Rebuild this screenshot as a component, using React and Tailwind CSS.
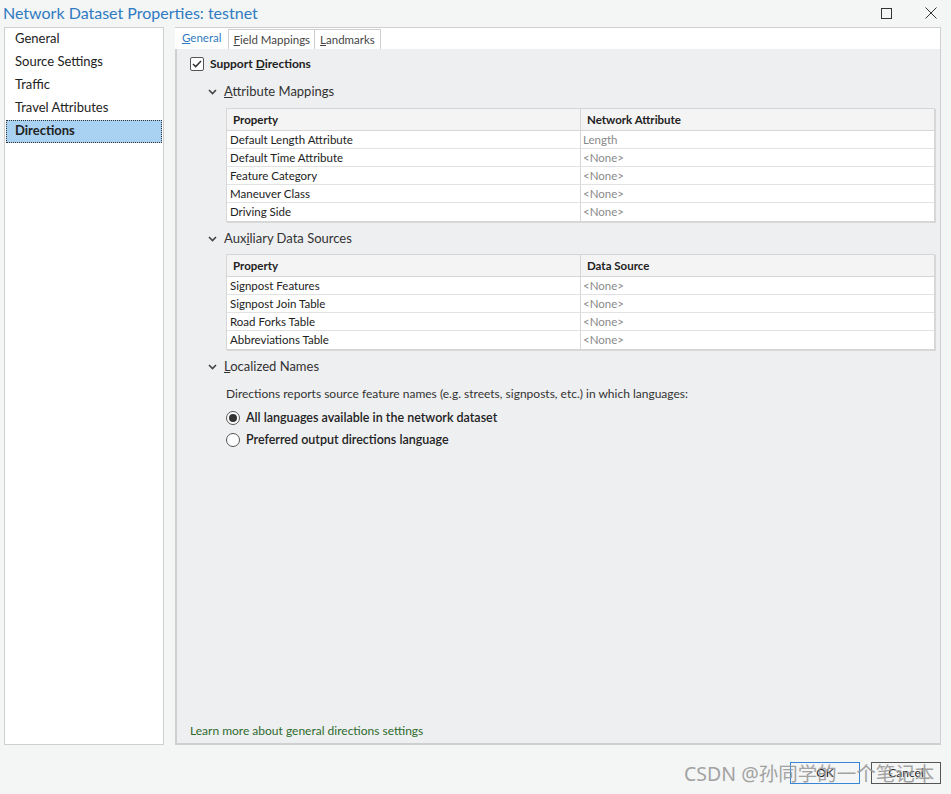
import React, { useState } from "react";

const navItems = ["General", "Source Settings", "Traffic", "Travel Attributes", "Directions"];

const attributeRows = [
  ["Default Length Attribute", "Length"],
  ["Default Time Attribute", "<None>"],
  ["Feature Category", "<None>"],
  ["Maneuver Class", "<None>"],
  ["Driving Side", "<None>"],
];

const sourceRows = [
  ["Signpost Features", "<None>"],
  ["Signpost Join Table", "<None>"],
  ["Road Forks Table", "<None>"],
  ["Abbreviations Table", "<None>"],
];

const Chevron = () => (
  <svg width="9" height="6" viewBox="0 0 9 6" className="mr-[7px]">
    <path d="M1 1 L4.5 4.5 L8 1" fill="none" stroke="#444" strokeWidth="1.6" />
  </svg>
);

const Section = ({ label, hot }) => (
  <div className="flex h-[18px] items-center pl-[31px] text-[13px] text-[#333]">
    <Chevron />
    <span>
      {label.slice(0, hot)}
      <span className="underline">{label[hot]}</span>
      {label.slice(hot + 1)}
    </span>
  </div>
);

const PropTable = ({ head, rows }) => (
  <div className="ml-[49px] mr-[5px] border border-[#d6d6d6] bg-white text-[11.5px] text-[#222] shadow-[1px_1px_0_#d8d8d8]">
    <div className="flex h-[22px] items-center border-b border-[#d6d6d6] bg-[#f4f4f4] font-bold">
      <div className="flex h-full w-[354px] items-center border-r border-[#d6d6d6] pl-[6px]">Property</div>
      <div className="pl-[6px]">{head}</div>
    </div>
    {rows.map(([k, v], i) => (
      <div
        key={k}
        className={`flex h-[18px] items-center ${i < rows.length - 1 ? "border-b border-[#e2e2e2]" : ""}`}
      >
        <div className="flex h-full w-[354px] items-center border-r border-[#d6d6d6] pl-[3px]">{k}</div>
        <div className="pl-[2px] text-[#8a8a8a]">{v}</div>
      </div>
    ))}
  </div>
);

const Radio = ({ checked, label, onClick }) => (
  <div
    className="flex h-[16px] cursor-pointer items-center gap-[6px] pl-[49px] text-[12.5px] font-semibold text-[#222]"
    onClick={onClick}
  >
    <span className="flex h-[14px] w-[14px] items-center justify-center rounded-full border border-[#555] bg-white">
      {checked && <span className="h-[8px] w-[8px] rounded-full bg-[#333]" />}
    </span>
    {label}
  </div>
);

export default function App() {
  const [selected, setSelected] = useState("Directions");
  const [support, setSupport] = useState(true);
  const [lang, setLang] = useState(0);

  return (
    <div className="relative flex h-[794px] w-[951px] flex-col bg-[#f4f5f5] font-['Lato',sans-serif] text-[#222]">
      {/* title bar */}
      <div className="flex h-[27px] items-center justify-between pb-[1px] pl-[3px] pr-[14px]">
        <span className="text-[16px] text-[#2f7bc2]">Network Dataset Properties: testnet</span>
        <div className="flex items-center gap-[33px]">
          <svg width="11" height="11" viewBox="0 0 11 11">
            <rect x="0.5" y="0.5" width="10" height="10" fill="none" stroke="#333" />
          </svg>
          <svg width="12" height="12" viewBox="0 0 12 12">
            <path d="M0.5 0.5 L11.5 11.5 M11.5 0.5 L0.5 11.5" stroke="#333" strokeWidth="1" />
          </svg>
        </div>
      </div>

      <div className="flex h-[718px] gap-[11px] pl-[4px] pr-[10px]">
        {/* left nav */}
        <div className="w-[160px] border border-[#cfcfcf] bg-white">
          {navItems.map((item) => (
            <div
              key={item}
              onClick={() => setSelected(item)}
              className={`mx-[1px] flex h-[23px] cursor-pointer items-center pb-[2px] pl-[8px] text-[13px] ${
                selected === item
                  ? "border border-dotted border-[#333] bg-[#a9d1f1] font-bold"
                  : "border border-transparent"
              }`}
            >
              {item}
            </div>
          ))}
        </div>

        {/* right panel */}
        <div className="flex flex-1 flex-col">
          <div className="flex h-[22px] items-end border-r border-t border-[#cfcfcf] bg-white pl-[3px]">
            <div className="flex h-[21px] items-center px-[4px] pb-[2px] text-[11.5px] text-[#2f7bc2]">
              <span><span className="underline">G</span>eneral</span>
            </div>
            <div className="ml-[3px] flex h-[20px] items-center border border-b-0 border-[#cfcfcf] px-[4px] text-[11.5px] text-[#444]">
              <span><span className="underline">F</span>ield Mappings</span>
            </div>
            <div className="flex h-[20px] items-center border border-b-0 border-l-0 border-[#cfcfcf] px-[5px] text-[11.5px] text-[#444]">
              <span><span className="underline">L</span>andmarks</span>
            </div>
          </div>

          <div className="flex flex-1 flex-col border-b-2 border-l-2 border-r border-[#cfcfcf] bg-[#eeeff1]">
            <div
              className="mt-[5px] flex h-[20px] items-center gap-[6px] pl-[13px] text-[12px] font-bold"
              onClick={() => setSupport(!support)}
            >
              <span className="flex h-[14px] w-[14px] items-center justify-center rounded-[2px] border border-[#555] bg-white">
                {support && (
                  <svg width="10" height="8" viewBox="0 0 10 8">
                    <path d="M1 4 L3.7 6.6 L9 1" fill="none" stroke="#333" strokeWidth="1.5" />
                  </svg>
                )}
              </span>
              <span>Support <span className="underline">D</span>irections</span>
            </div>

            <div className="mt-[9px]">
              <Section label="Attribute Mappings" hot={0} />
            </div>
            <div className="mt-[7px]">
              <PropTable head="Network Attribute" rows={attributeRows} />
            </div>
            <div className="mt-[8px]">
              <Section label="Auxiliary Data Sources" hot={3} />
            </div>
            <div className="mt-[6px]">
              <PropTable head="Data Source" rows={sourceRows} />
            </div>
            <div className="mt-[8px]">
              <Section label="Localized Names" hot={0} />
            </div>
            <div className="mt-[10px] flex h-[16px] items-center pl-[49px] text-[12px] text-[#333]">
              Directions reports source feature names (e.g. streets, signposts, etc.) in which languages:
            </div>
            <div className="mt-[8px] flex flex-col gap-[6px]">
              <Radio checked={lang === 0} onClick={() => setLang(0)} label="All languages available in the network dataset" />
              <Radio checked={lang === 1} onClick={() => setLang(1)} label="Preferred output directions language" />
            </div>

            <div className="mt-auto pb-[3px] pl-[13px] text-[12px] text-[#2e6b2e]">
              Learn more about general directions settings
            </div>
          </div>
        </div>
      </div>

      {/* footer buttons */}
      <div className="flex flex-1 items-start justify-end gap-[11px] pr-[10px] pt-[17px]">
        <button className="h-[22px] w-[70px] border border-[#3a86d6] bg-[#f4f5f5] text-[12px] text-[#222]">OK</button>
        <button className="h-[22px] w-[70px] border border-[#555] bg-[#f4f5f5] text-[12px] text-[#222]">Cancel</button>
      </div>

      {/* watermark */}
      <div className="pointer-events-none absolute left-[684px] top-[761px] font-['Noto_Sans','Noto_Sans_CJK_SC',sans-serif] text-[19.5px] leading-[26px] text-[#9a9a9a] opacity-90">
        CSDN @孙同学的一个笔记本
      </div>
    </div>
  );
}
